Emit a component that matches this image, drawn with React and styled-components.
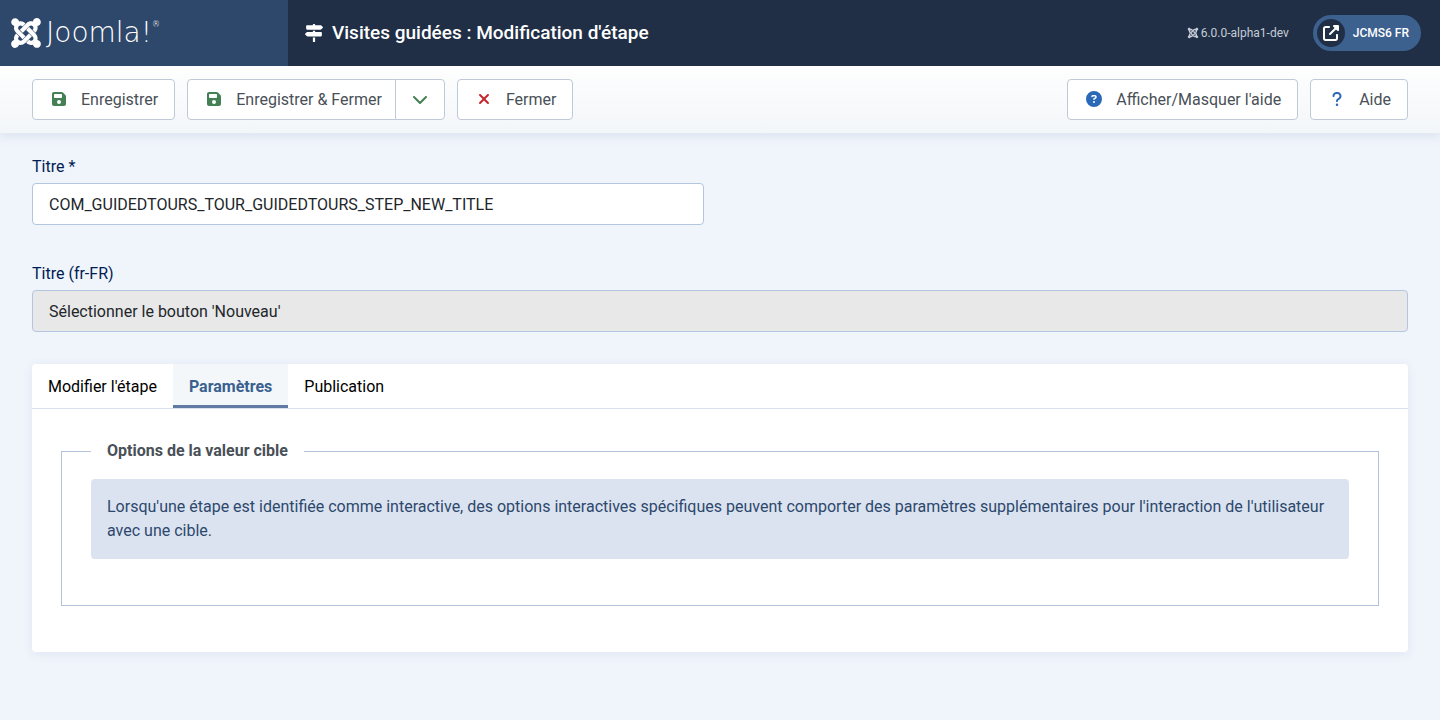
import React from "react";
import styled, { createGlobalStyle } from "styled-components";
import { FaMapSigns } from "react-icons/fa";
import {
  FaJoomla,
  FaFloppyDisk,
  FaChevronDown,
  FaXmark,
  FaCircleQuestion,
  FaQuestion,
  FaUpRightFromSquare,
} from "react-icons/fa6";

const GlobalStyle = createGlobalStyle`
  *, *::before, *::after { box-sizing: border-box; }
  body {
    margin: 0;
    min-height: 100vh;
    background: #f0f4fb;
    color: #22262a;
    font-family: Roboto, "Liberation Sans", sans-serif;
    font-size: 16px;
    line-height: 24px;
  }
  button, input { font: inherit; color: inherit; }
  svg { display: block; flex: none; }
`;

const Header = styled.header`
  position: relative;
  z-index: 1;
  display: flex;
  align-items: stretch;
  min-height: 66px;
  background: #202f46;
  color: #fff;
`;

const Brand = styled.a`
  display: flex;
  align-items: center;
  gap: 3px;
  flex: 0 0 288px;
  padding: 0 9px;
  background: #2e486b;
  color: #fff;
  text-decoration: none;
`;

const WordMark = styled.span`
  display: flex;
  align-items: flex-start;
  font-family: "DejaVu Sans", sans-serif;
  font-size: 28px;
  font-weight: 200;
  line-height: 32px;
`;

const Registered = styled.span`
  font-size: 8px;
  line-height: 16px;
`;

const PageTitle = styled.h1`
  display: flex;
  align-items: center;
  gap: 9px;
  flex: 1;
  margin: 0;
  padding: 0 17px;
  font-size: 19px;
  font-weight: 500;
  line-height: 24px;
`;

const HeaderItems = styled.div`
  display: flex;
  align-items: center;
  gap: 24px;
  padding-right: 19px;
  font-size: 12px;
`;

const Version = styled.div`
  display: flex;
  align-items: center;
  gap: 2px;
  color: #c5ccd6;
`;

const SiteLink = styled.a`
  display: flex;
  align-items: center;
  gap: 8px;
  height: 36px;
  padding: 0 12px 0 4px;
  border-radius: 18px;
  background: #3d618f;
  color: #fff;
  font-weight: 500;
  text-decoration: none;
`;

const SiteIcon = styled.span`
  display: grid;
  place-items: center;
  width: 28px;
  height: 28px;
  border-radius: 50%;
  background: #202f46;
`;

const Toolbar = styled.div`
  display: flex;
  flex-wrap: wrap;
  gap: 12px;
  padding: 13px 32px;
  background: linear-gradient(#fefefe, #f3f6f9);
  box-shadow: 0 3px 10px #d9e2ef;
`;

const Spacer = styled.div`
  flex: 1;
`;

const ButtonGroup = styled.div`
  display: flex;
`;

const ToolButton = styled.button`
  display: flex;
  align-items: center;
  gap: 12px;
  height: 41px;
  padding: 0 ${(p) => (p.$join === "start" ? 13 : 16)}px 0 16px;
  border: 1px solid #c0c9d8;
  border-radius: ${(p) =>
    p.$join === "start" ? "4px 0 0 4px" : p.$join === "end" ? "0 4px 4px 0" : "4px"};
  margin-left: ${(p) => (p.$join === "end" ? -1 : 0)}px;
  background: #fff;
  color: #495057;
  cursor: pointer;
`;

const ButtonIcon = styled.span`
  display: grid;
  place-items: center;
  width: ${(p) => (p.$narrow ? 16 : 20)}px;
  height: 17px;
  align-items: start;
  color: ${(p) => p.$color};
`;

const Main = styled.main`
  padding: 22px 32px 32px;
`;

const Field = styled.div`
  display: flex;
  flex-direction: column;
  gap: 4px;
`;

const HalfGrid = styled.div`
  display: grid;
  grid-template-columns: 1fr 1fr;
  column-gap: 32px;
  margin-bottom: 37px;
`;

const Label = styled.label`
  color: #001c53;
`;

const TextInput = styled.input`
  width: 100%;
  height: 42px;
  padding: 0 16px;
  border: 1px solid #b4c5e0;
  border-radius: 4px;
  background: #fff;
  outline: 0;

  &:read-only {
    background: #e8e8e8;
  }
`;

const Card = styled.section`
  margin-top: 32px;
  border-radius: 4px;
  background: #fff;
  box-shadow: 0 2px 10px #dfe6f2;
  padding-bottom: 46px;
`;

const TabList = styled.div`
  display: flex;
  border-bottom: 1px solid #d8e2ee;
`;

const Tab = styled.button`
  height: 44px;
  padding: 2px 16px 0;
  border: 0;
  border-radius: ${(p) => (p.$active ? 0 : 4)}px;
  background: ${(p) => (p.$active ? "#f3f7fa" : "transparent")};
  box-shadow: ${(p) => (p.$active ? "inset 0 -3px 0 #607ba3" : "none")};
  color: ${(p) => (p.$active ? "#3a608f" : "#000")};
  font-weight: ${(p) => (p.$active ? 700 : 400)};
  cursor: pointer;
`;

const OptionsSet = styled.fieldset`
  min-width: 0;
  margin: 30px 29px 0;
  padding: 16px 29px 46px;
  border: 1px solid #b4c3dc;
`;

const Legend = styled.legend`
  padding: 0 16px;
  color: #495057;
  font-weight: 700;
`;

const Notice = styled.div`
  padding: 16px;
  border-radius: 4px;
  background: #dce3f0;
  color: #2c486d;
`;

const tabs = ["Modifier l'étape", "Paramètres", "Publication"];

function Action({ icon, color, join, children }) {
  return (
    <ToolButton type="button" $join={join}>
      <ButtonIcon $color={color}>{icon}</ButtonIcon>
      {children}
    </ToolButton>
  );
}

export default function App() {
  const [active, setActive] = React.useState(1);
  return (
    <>
      <GlobalStyle />
      <Header>
        <Brand href="#">
          <FaJoomla size={34} />
          <WordMark>
            Joomla!<Registered>®</Registered>
          </WordMark>
        </Brand>
        <PageTitle>
          <FaMapSigns size={18} />
          Visites guidées : Modification d'étape
        </PageTitle>
        <HeaderItems>
          <Version>
            <FaJoomla size={12} />
            6.0.0-alpha1-dev
          </Version>
          <SiteLink href="#">
            <SiteIcon>
              <FaUpRightFromSquare size={16} />
            </SiteIcon>
            JCMS6 FR
          </SiteLink>
        </HeaderItems>
      </Header>

      <Toolbar>
        <Action icon={<FaFloppyDisk size={16} />} color="#448054">
          Enregistrer
        </Action>
        <ButtonGroup>
          <Action icon={<FaFloppyDisk size={16} />} color="#448054" join="start">
            Enregistrer &amp; Fermer
          </Action>
          <ToolButton type="button" $join="end" aria-label="Plus d'actions">
            <ButtonIcon $narrow $color="#448054">
              <FaChevronDown size={16} />
            </ButtonIcon>
          </ToolButton>
        </ButtonGroup>
        <Action icon={<FaXmark size={16} />} color="#c8262b">
          Fermer
        </Action>
        <Spacer />
        <Action icon={<FaCircleQuestion size={16} />} color="#2a69b8">
          Afficher/Masquer l'aide
        </Action>
        <Action icon={<FaQuestion size={16} />} color="#2a69b8">
          Aide
        </Action>
      </Toolbar>

      <Main>
        <HalfGrid>
          <Field>
            <Label htmlFor="title">Titre *</Label>
            <TextInput
              id="title"
              type="text"
              defaultValue="COM_GUIDEDTOURS_TOUR_GUIDEDTOURS_STEP_NEW_TITLE"
            />
          </Field>
        </HalfGrid>
        <Field>
          <Label htmlFor="title-fr">Titre (fr-FR)</Label>
          <TextInput id="title-fr" type="text" readOnly value="Sélectionner le bouton 'Nouveau'" />
        </Field>

        <Card>
          <TabList role="tablist">
            {tabs.map((name, i) => (
              <Tab
                key={name}
                type="button"
                role="tab"
                aria-selected={i === active}
                $active={i === active}
                onClick={() => setActive(i)}
              >
                {name}
              </Tab>
            ))}
          </TabList>
          <OptionsSet>
            <Legend>Options de la valeur cible</Legend>
            <Notice>
              Lorsqu'une étape est identifiée comme interactive, des options interactives
              spécifiques peuvent comporter des paramètres supplémentaires pour l'interaction de
              l'utilisateur avec une cible.
            </Notice>
          </OptionsSet>
        </Card>
      </Main>
    </>
  );
}
